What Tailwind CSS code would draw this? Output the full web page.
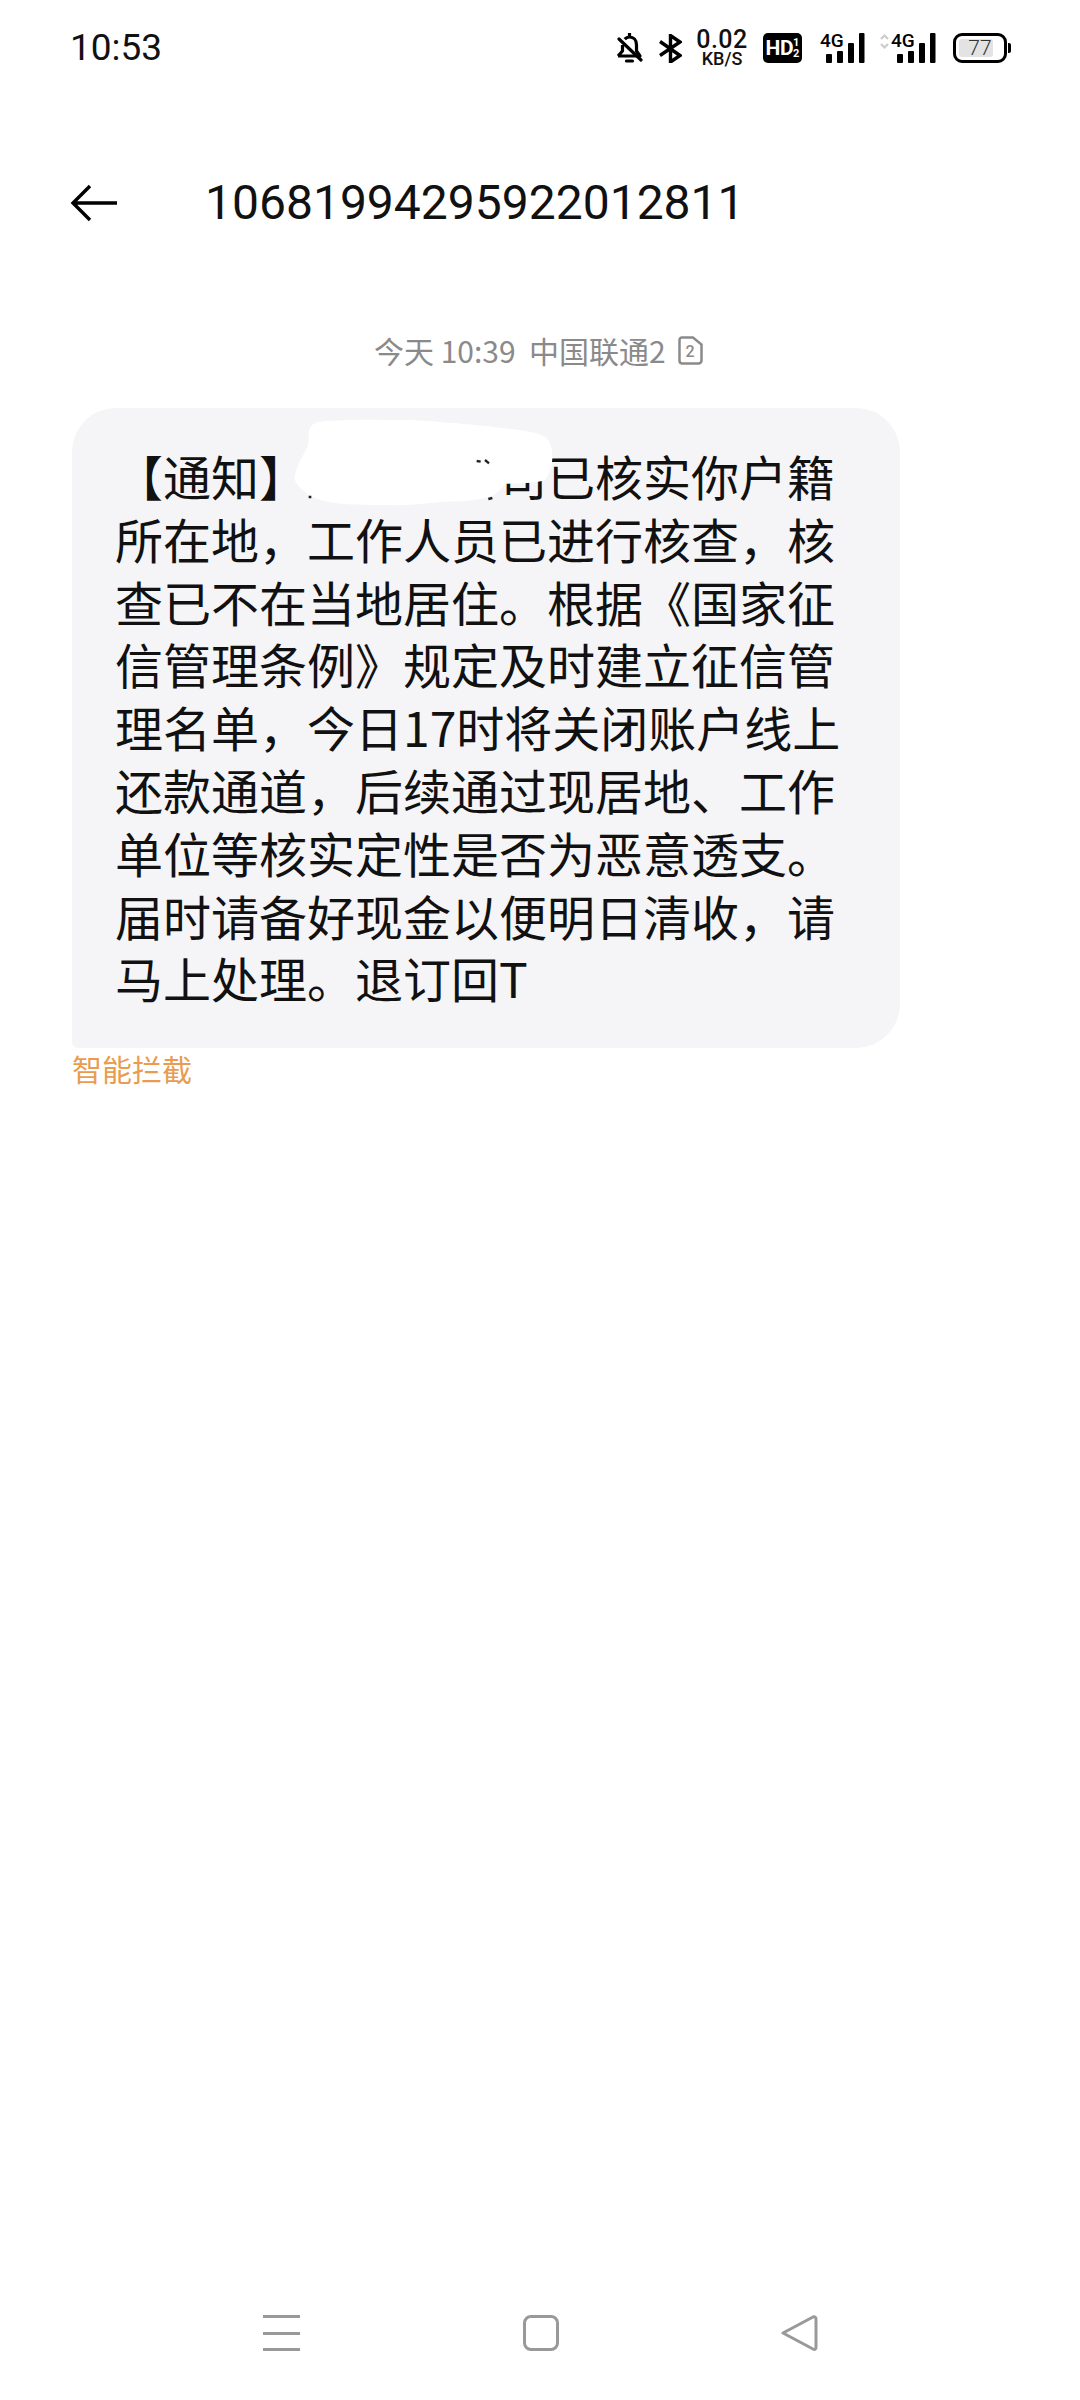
<!DOCTYPE html>
<html lang="zh-CN">
<head>
    <meta charset="UTF-8">
    <meta name="viewport" content="width=device-width, initial-scale=1.0">
    <title>短信</title>
    <script src="https://cdn.jsdelivr.net/npm/@tailwindcss/browser@4"></script>
</head>
<body class="bg-white font-['Noto_Sans_CJK_SC','Noto_Sans',sans-serif]">
    <div class="flex flex-col h-[2400px] w-[1080px] overflow-hidden">
        <!-- status bar -->
        <div class="flex items-center h-[94px] pl-[70px] text-black">
            <span class="font-['Roboto',sans-serif] text-[37px] leading-none text-[#111]">10:53</span>
            <div class="ml-auto mr-[69px] flex items-center h-[40px] pt-[2px]">
                <svg class="w-[27px] h-[30px]" viewBox="0 0 27 30" fill="none" stroke="#000" stroke-width="3.2" stroke-linejoin="round">
                    <path d="M2 23h22l-3.500-5v-6c0-5-3-8-7-8-2 0-3.600.8-4.800 2.100M6.500 12v6L2 23"/>
                    <path d="M3 6l22 21" stroke-linecap="round"/>
                    <path d="M13.500 0v3M10.500 28h6" stroke-linecap="round"/>
                </svg>
                <svg class="ml-[16px] w-[23px] h-[29px]" viewBox="0 0 23 29" fill="none" stroke="#000" stroke-width="3.400">
                    <path d="M1 7.500l20 14-9.500 6.500V1.500l9.500 6.500L1 21.500"/>
                </svg>
                <div class="ml-[15px] w-[50px] flex flex-col items-center font-['Roboto',sans-serif] text-[#111]">
                    <span class="text-[25px] leading-[21px] font-medium tracking-[0.5px]">0.02</span>
                    <span class="text-[18px] leading-[17px] font-medium">KB/S</span>
                </div>
                <div class="ml-[16px] w-[39px] h-[30px] rounded-[5px] bg-black flex items-center justify-center font-['Roboto',sans-serif] font-bold text-white">
                    <span class="text-[21px] leading-none tracking-[-0.5px]">HD</span>
                    <span class="flex flex-col text-[11px] leading-[11px]"><span>1</span><span>2</span></span>
                </div>
                <svg class="ml-[18px] w-[45px] h-[30px] overflow-visible" viewBox="0 0 45 30">
                    <text x="0" y="14" font-family="Roboto" font-size="19" font-weight="500" fill="#000">4G</text>
                    <rect x="6" y="21" width="6" height="9" rx="1" fill="#000"/>
                    <rect x="17" y="18" width="6" height="12" rx="1" fill="#000"/>
                    <rect x="28" y="10" width="6" height="20" rx="1" fill="#000"/>
                    <rect x="39" y="0" width="5.500" height="30" rx="1" fill="#000"/>
                </svg>
                <svg class="ml-[15px] w-[56px] h-[30px] overflow-visible" viewBox="0 0 56 30">
                    <path d="M1 6l3.500-3.500L8 6M1 11l3.500 3.500L8 11" fill="none" stroke="#ccc" stroke-width="2.200"/>
                    <text x="11" y="14" font-family="Roboto" font-size="19" font-weight="500" fill="#000">4G</text>
                    <rect x="17" y="21" width="6" height="9" rx="1" fill="#000"/>
                    <rect x="28" y="18" width="6" height="12" rx="1" fill="#000"/>
                    <rect x="39" y="10" width="6" height="20" rx="1" fill="#000"/>
                    <rect x="50" y="0" width="5.500" height="30" rx="1" fill="#000"/>
                </svg>
                <div class="ml-[17px] flex items-center">
                    <div class="relative w-[54px] h-[30px] rounded-[9px] border-[3px] border-black p-[3px]">
                        <div class="h-full w-[80%] bg-[#e3e3e3] rounded-[3px]"></div>
                        <span class="absolute inset-0 flex items-center justify-center font-['Roboto',sans-serif] font-light text-[21px] leading-none text-[#333]">77</span>
                    </div>
                    <div class="ml-[1px] w-[3px] h-[10px] bg-black rounded-r-[2px]"></div>
                </div>
            </div>
        </div>

        <!-- header -->
        <div class="flex items-center h-[108px] mt-[55px] pl-[70px]">
            <svg class="w-[48px] h-[38px]" viewBox="0 0 48 38" fill="none" stroke="#000" stroke-width="3.400">
                <path d="M47 19H3M20 2L3 19l17 17"/>
            </svg>
            <span class="ml-[87px] font-['Roboto',sans-serif] text-[48px] leading-none text-[#111]">10681994295922012811</span>
        </div>

        <!-- date line -->
        <div class="flex items-center h-[40px] mt-[73px] pl-[374px] text-[#8a8a8a]">
            <span class="text-[30px] leading-none">今天 10:39&nbsp;&nbsp;中国联通2</span>
            <svg class="ml-[12px] w-[25px] h-[29px]" viewBox="0 0 25 29" fill="none" stroke="#8a8a8a" stroke-width="2.500">
                <path d="M4 1.500h11l8.500 7v16a3 3 0 0 1-3 3H4a3 3 0 0 1-2.500-3v-20.500a2.500 2.500 0 0 1 2.500-2.500z"/>
                <text x="7.500" y="21" font-family="Roboto" font-size="16" font-weight="500" fill="#8a8a8a" stroke="none">2</text>
            </svg>
        </div>

        <!-- message bubble -->
        <div class="relative ml-[72px] mt-[38px] w-[828px] h-[640px] pt-[36px] pl-[43px] bg-[#f5f5f7] rounded-[44px] rounded-bl-[6px] text-[48px] leading-[62.8px] text-[#111] whitespace-nowrap">
            <div>【通知】　　　　&ensp;司已核实你户籍</div>
            <div>所在地，工作人员已进行核查，核</div>
            <div>查已不在当地居住。根据《国家征</div>
            <div>信管理条例》规定及时建立征信管</div>
            <div>理名单，今日17时将关闭账户线上</div>
            <div>还款通道，后续通过现居地、工作</div>
            <div>单位等核实定性是否为恶意透支。</div>
            <div>届时请备好现金以便明日清收，请</div>
            <div>马上处理。退订回T</div>
            <!-- white scribble over the sender's name -->
            <svg class="absolute left-[198px] top-[-3px] w-[300px] h-[110px]" viewBox="0 0 900 330">
                <path fill="#fff" d="M115 90C118 60 130 50 170 48C250 42 330 45 400 45C460 45 510 52 560 55C620 60 660 65 700 70C760 76 810 82 830 100C855 125 852 190 825 226C790 236 740 236 705 236C690 255 680 268 660 275C610 290 560 288 520 290C460 296 400 302 350 300C290 300 240 300 200 295C160 288 125 280 110 265C85 245 70 230 75 210C80 185 92 165 100 150C108 135 120 120 115 90Z"/>
                <path d="M620 168l12 2M645 165l12 10M116 276h8M655 282l12-3" stroke="#222" stroke-width="7" fill="none"/>
            </svg>
        </div>
        <div class="ml-[72px] mt-[2px] text-[30px] leading-[36px] text-[#e99c50]">智能拦截</div>

        <!-- nav bar -->
        <div class="mt-auto mb-[49px] relative h-[36px]">
            <div class="absolute left-[263px] top-[0px] w-[37px] h-[36px] flex flex-col justify-between">
                <div class="h-[3px] bg-[#999]"></div>
                <div class="h-[3px] bg-[#999]"></div>
                <div class="h-[3px] bg-[#999]"></div>
            </div>
            <div class="absolute left-[523px] top-[0px] w-[36px] h-[36px] rounded-[8px] border-[3px] border-[#999]"></div>
            <svg class="absolute left-[780px] top-[0px] w-[38px] h-[36px]" viewBox="0 0 38 36" fill="none" stroke="#999" stroke-width="3" stroke-linejoin="round">
                <path d="M3 18L33 2c2-.5 3 .5 3 2v28c0 2-1 3-3 2z"/>
            </svg>
        </div>
    </div>
</body>
</html>
